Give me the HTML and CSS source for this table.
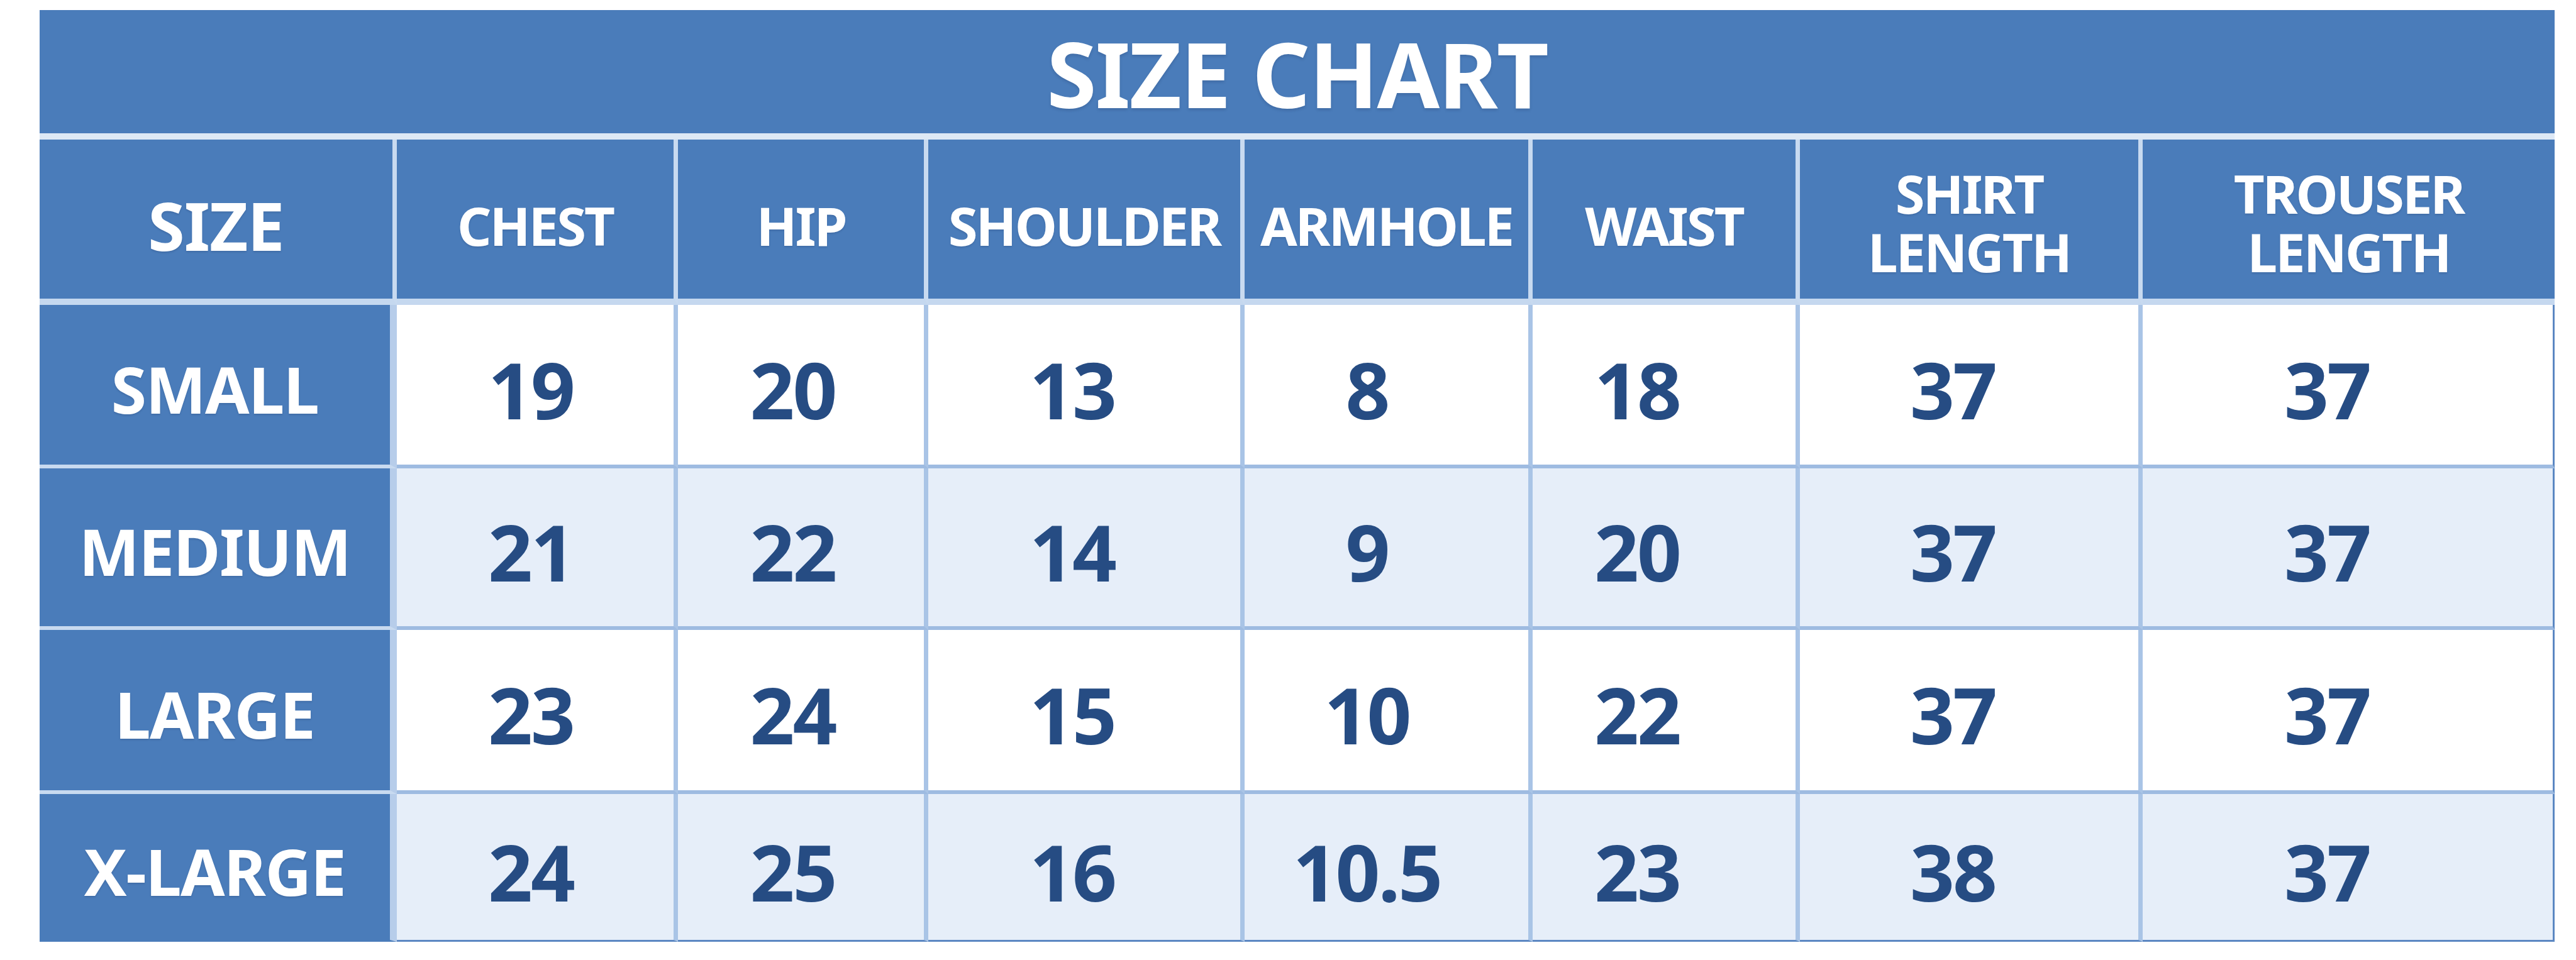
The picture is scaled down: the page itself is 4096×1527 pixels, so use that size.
FILE: index.html
```html
<!DOCTYPE html>
<html lang="en">
<head>
<meta charset="utf-8">
<title>Size Chart</title>
<link rel="stylesheet" href="styles.css">
</head>
<body>
<div class="chart">
  <div class="title">SIZE CHART</div>
  <div class="sep"></div>
  <div class="grid">
    <div class="cell head big">SIZE</div>
    <div class="cell head">CHEST</div>
    <div class="cell head">HIP</div>
    <div class="cell head">SHOULDER</div>
    <div class="cell head">ARMHOLE</div>
    <div class="cell head">WAIST</div>
    <div class="cell head two"><span class="ln">SHIRT</span><span class="ln">LENGTH</span></div>
    <div class="cell head two last"><span class="ln">TROUSER</span><span class="ln">LENGTH</span></div>

    <div class="cell label">SMALL</div>
    <div class="cell val c2">19</div>
    <div class="cell val c3">20</div>
    <div class="cell val c4">13</div>
    <div class="cell val c5">8</div>
    <div class="cell val c6">18</div>
    <div class="cell val c7">37</div>
    <div class="cell val c8 last">37</div>

    <div class="cell label">MEDIUM</div>
    <div class="cell val alt c2">21</div>
    <div class="cell val alt c3">22</div>
    <div class="cell val alt c4">14</div>
    <div class="cell val alt c5">9</div>
    <div class="cell val alt c6">20</div>
    <div class="cell val alt c7">37</div>
    <div class="cell val alt c8 last">37</div>

    <div class="cell label">LARGE</div>
    <div class="cell val c2">23</div>
    <div class="cell val c3">24</div>
    <div class="cell val c4">15</div>
    <div class="cell val c5">10</div>
    <div class="cell val c6">22</div>
    <div class="cell val c7">37</div>
    <div class="cell val c8 last">37</div>

    <div class="cell label end">X-LARGE</div>
    <div class="cell val alt end c2">24</div>
    <div class="cell val alt end c3">25</div>
    <div class="cell val alt end c4">16</div>
    <div class="cell val alt end c5">10.5</div>
    <div class="cell val alt end c6">23</div>
    <div class="cell val alt end c7">38</div>
    <div class="cell val alt end c8 last">37</div>
  </div>
</div>
</body>
</html>
```

FILE: styles.css
```css
* { box-sizing: border-box; }
html, body { margin: 0; padding: 0; background: #ffffff; }
body {
  font-family: "Noto Sans", "Open Sans", "Liberation Sans", sans-serif;
  width: 4096px;
  height: 1527px;
  overflow: hidden;
}
.chart {
  width: 3999px;
  margin: 16px 0 0 63px;
}
.title {
  height: 196px;
  background: #4a7cba;
  color: #ffffff;
  font-weight: 700;
  font-size: 144px;
  letter-spacing: -2px;
  line-height: 1;
  display: flex;
  align-items: center;
  justify-content: center;
  padding-top: 4px;
  text-shadow: 0 3px 4px rgba(20, 40, 80, 0.18);
}
.sep {
  height: 10px;
  background: #dde8f5;
}
.grid {
  display: grid;
  grid-template-columns: 568px 447px 398px 503px 458px 425px 545px 655px;
  grid-template-rows: 263px 260px 257px 261px 235px;
}
.cell {
  display: flex;
  align-items: center;
  justify-content: center;
  text-align: center;
  border-right: 7px solid #a9c4e6;
  border-bottom: 6px solid #9ebbe1;
}
.cell.last { border-right: 3px solid #5b87c2; }
.cell.end { border-bottom: 3px solid #5b87c2; }
.head {
  background: #4a7cba;
  color: #ffffff;
  font-weight: 700;
  font-size: 85px;
  letter-spacing: -3px;
  line-height: 93px;
  border-right-color: #c8daf0;
  border-bottom: 10px solid #c5d8ef;
  padding-top: 20px;
  text-shadow: 0 2px 3px rgba(20, 40, 80, 0.18);
}
.head.last { border-right: 0; }
.head.two {
  flex-direction: column;
  padding-top: 10px;
}
.ln { display: block; }
.head.big { font-size: 106px; letter-spacing: -1px; }
.label {
  background: #4a7cba;
  color: #ffffff;
  font-weight: 700;
  font-size: 102px;
  letter-spacing: -1.5px;
  border-right: 11px solid #b7cdea;
  border-bottom-color: #c8daf0;
  padding-top: 12px;
  text-shadow: 0 2px 3px rgba(20, 40, 80, 0.18);
}
.label.end { border-bottom: 3px solid #4a7cba; }
.val {
  background: #ffffff;
  color: #264c83;
  font-weight: 700;
  font-size: 124px;
  letter-spacing: -3px;
  padding-top: 12px;
}
.val.alt { background: #e6eef9; }
.val.c2 { padding-right: 14px; }
.val.c3 { padding-right: 26px; }
.val.c4 { padding-right: 38px; }
.val.c5 { padding-right: 62px; }
.val.c6 { padding-right: 86px; }
.val.c7 { padding-right: 52px; }
.val.c8 { padding-right: 66px; }
```
